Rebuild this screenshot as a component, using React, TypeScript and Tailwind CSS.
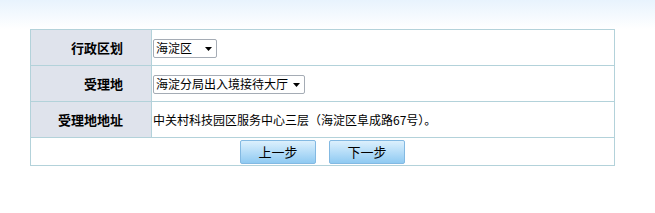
function Select({ value, width }: { value: string; width: string }) {
  return (
    <span className="relative inline-block align-middle">
      <select
        className={`${width} h-[19px] appearance-none border border-[#a5acb5] rounded-[2px] bg-white text-[12px] leading-none pl-[2px] pr-[16px] outline-none`}
      >
        <option>{value}</option>
      </select>
      <svg
        className="absolute right-[5px] top-[8px] pointer-events-none"
        width="7"
        height="4"
        viewBox="0 0 7 4"
      >
        <path d="M0 0H7L3.5 4Z" fill="#000" />
      </svg>
    </span>
  );
}

export default function App() {
  const font = { fontFamily: '"Noto Sans CJK SC", "Liberation Sans", sans-serif' };
  return (
    <div className="w-[655px] h-[213px] bg-white text-[12px] text-black" style={font}>
      <div className="h-[29px] bg-gradient-to-b from-[#e8f3fd] to-white" />
      <div className="pl-[30px]">
        <table className="w-[585px] border-collapse border border-[#b3d2da]">
          <tbody>
            <tr className="h-[36px]">
              <td className="w-[121px] bg-[#dfe3ec] border border-[#b3d2da] text-right pr-[28px] font-bold text-[13px]">行政区划</td>
              <td className="border border-[#b3d2da] pl-[1px]">
                <Select value="海淀区" width="w-[64px]" />
              </td>
            </tr>
            <tr className="h-[36px]">
              <td className="bg-[#dfe3ec] border border-[#b3d2da] text-right pr-[28px] font-bold text-[13px]">受理地</td>
              <td className="border border-[#b3d2da] pl-[1px]">
                <Select value="海淀分局出入境接待大厅" width="w-[152px]" />
              </td>
            </tr>
            <tr className="h-[36px]">
              <td className="bg-[#dfe3ec] border border-[#b3d2da] text-right pr-[28px] font-bold text-[13px]">受理地地址</td>
              <td className="border border-[#b3d2da] pl-[1px]">中关村科技园区服务中心三层（海淀区阜成路67号）。</td>
            </tr>
            <tr className="h-[28px]">
              <td colSpan={2} className="border border-[#b3d2da]">
                <div className="flex justify-center gap-[13px]">
                  <button className="w-[76px] h-[24px] border border-[#83b9e2] rounded-[2px] bg-gradient-to-b from-[#dcf0fd] to-[#8fcaf2] text-[13px]">上一步</button>
                  <button className="w-[76px] h-[24px] border border-[#83b9e2] rounded-[2px] bg-gradient-to-b from-[#dcf0fd] to-[#8fcaf2] text-[13px]">下一步</button>
                </div>
              </td>
            </tr>
          </tbody>
        </table>
      </div>
    </div>
  );
}
